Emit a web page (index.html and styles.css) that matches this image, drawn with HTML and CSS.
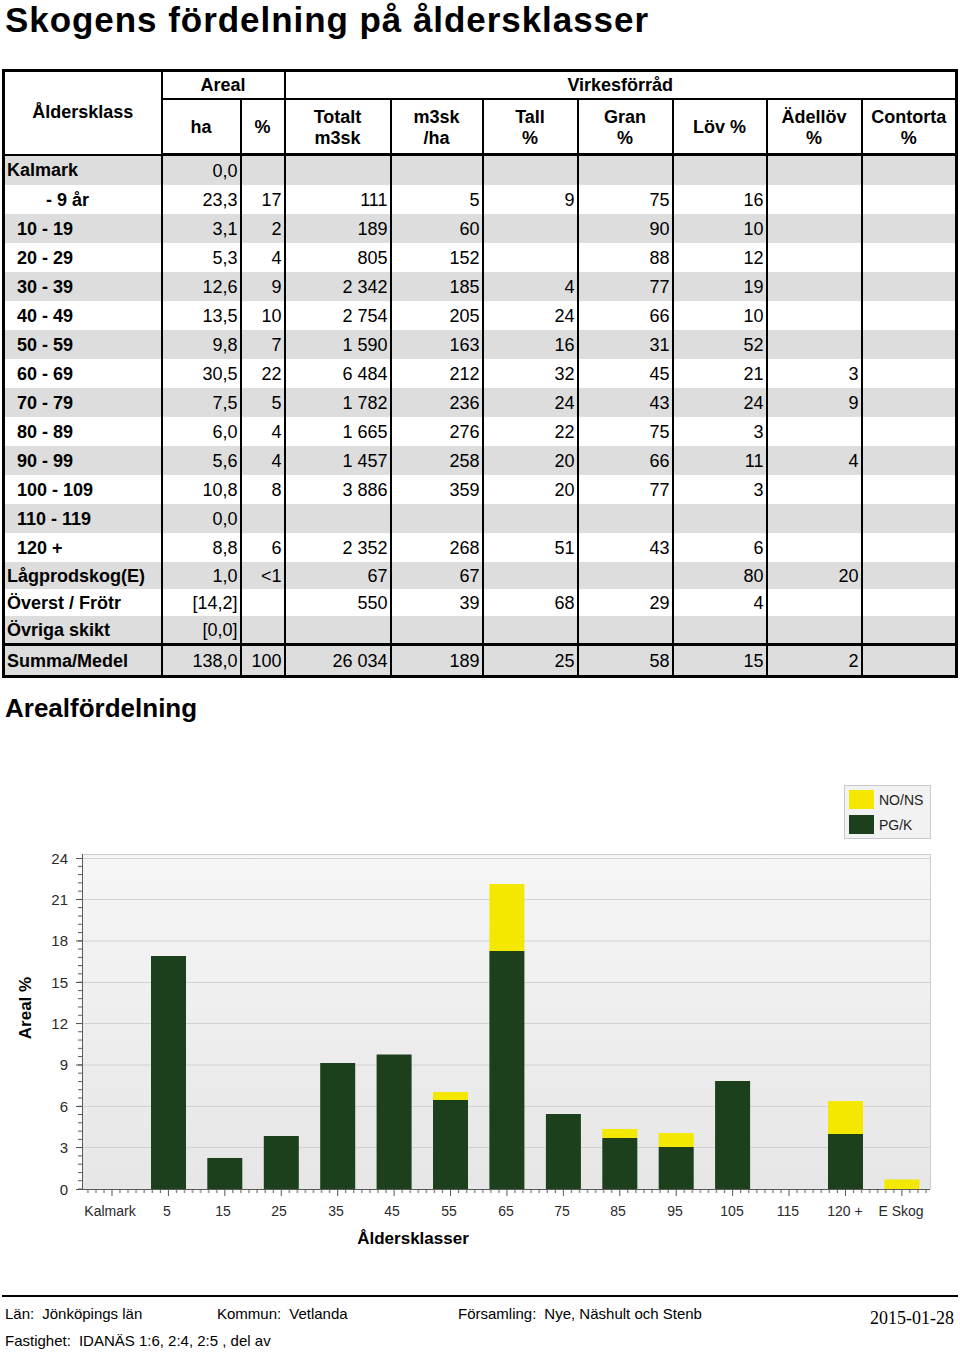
FILE: index.html
```html
<!DOCTYPE html>
<html lang="sv">
<head>
<meta charset="utf-8">
<title>Skogens fördelning på åldersklasser</title>
<link rel="stylesheet" href="styles.css">
</head>
<body>
<h1 class="title">Skogens fördelning på åldersklasser</h1>

<table class="age-table">
  <colgroup>
    <col class="c-label"><col class="c-ha"><col class="c-pct"><col class="c-tot"><col class="c-ha2">
    <col class="c-sp"><col class="c-sp"><col class="c-lov"><col class="c-sp"><col class="c-sp">
  </colgroup>
  <thead>
    <tr class="head-1">
      <th rowspan="2">Åldersklass</th>
      <th colspan="2">Areal</th>
      <th colspan="7">Virkesförråd</th>
    </tr>
    <tr class="head-2">
      <th>ha</th><th>%</th><th>Totalt<br>m3sk</th><th>m3sk<br>/ha</th><th>Tall<br>%</th><th>Gran<br>%</th><th>Löv %</th><th>Ädellöv<br>%</th><th>Contorta<br>%</th>
    </tr>
  </thead>
  <tbody>
    <tr class="alt"><td class="lbl">Kalmark</td><td>0,0</td><td></td><td></td><td></td><td></td><td></td><td></td><td></td><td></td></tr>
    <tr><td class="lbl lbl-deep">- 9 år</td><td>23,3</td><td>17</td><td>111</td><td>5</td><td>9</td><td>75</td><td>16</td><td></td><td></td></tr>
    <tr class="alt"><td class="lbl lbl-in">10 - 19</td><td>3,1</td><td>2</td><td>189</td><td>60</td><td></td><td>90</td><td>10</td><td></td><td></td></tr>
    <tr><td class="lbl lbl-in">20 - 29</td><td>5,3</td><td>4</td><td>805</td><td>152</td><td></td><td>88</td><td>12</td><td></td><td></td></tr>
    <tr class="alt"><td class="lbl lbl-in">30 - 39</td><td>12,6</td><td>9</td><td>2 342</td><td>185</td><td>4</td><td>77</td><td>19</td><td></td><td></td></tr>
    <tr><td class="lbl lbl-in">40 - 49</td><td>13,5</td><td>10</td><td>2 754</td><td>205</td><td>24</td><td>66</td><td>10</td><td></td><td></td></tr>
    <tr class="alt"><td class="lbl lbl-in">50 - 59</td><td>9,8</td><td>7</td><td>1 590</td><td>163</td><td>16</td><td>31</td><td>52</td><td></td><td></td></tr>
    <tr><td class="lbl lbl-in">60 - 69</td><td>30,5</td><td>22</td><td>6 484</td><td>212</td><td>32</td><td>45</td><td>21</td><td>3</td><td></td></tr>
    <tr class="alt"><td class="lbl lbl-in">70 - 79</td><td>7,5</td><td>5</td><td>1 782</td><td>236</td><td>24</td><td>43</td><td>24</td><td>9</td><td></td></tr>
    <tr><td class="lbl lbl-in">80 - 89</td><td>6,0</td><td>4</td><td>1 665</td><td>276</td><td>22</td><td>75</td><td>3</td><td></td><td></td></tr>
    <tr class="alt"><td class="lbl lbl-in">90 - 99</td><td>5,6</td><td>4</td><td>1 457</td><td>258</td><td>20</td><td>66</td><td>11</td><td>4</td><td></td></tr>
    <tr><td class="lbl lbl-in">100 - 109</td><td>10,8</td><td>8</td><td>3 886</td><td>359</td><td>20</td><td>77</td><td>3</td><td></td><td></td></tr>
    <tr class="alt"><td class="lbl lbl-in">110 - 119</td><td>0,0</td><td></td><td></td><td></td><td></td><td></td><td></td><td></td><td></td></tr>
    <tr><td class="lbl lbl-in">120 +</td><td>8,8</td><td>6</td><td>2 352</td><td>268</td><td>51</td><td>43</td><td>6</td><td></td><td></td></tr>
    <tr class="alt short"><td class="lbl">Lågprodskog(E)</td><td>1,0</td><td>&lt;1</td><td>67</td><td>67</td><td></td><td></td><td>80</td><td>20</td><td></td></tr>
    <tr class="mid"><td class="lbl">Överst / Frötr</td><td>[14,2]</td><td></td><td>550</td><td>39</td><td>68</td><td>29</td><td>4</td><td></td><td></td></tr>
    <tr class="alt mid last"><td class="lbl">Övriga skikt</td><td>[0,0]</td><td></td><td></td><td></td><td></td><td></td><td></td><td></td><td></td></tr>
  </tbody>
  <tfoot>
    <tr class="alt sum"><td class="lbl">Summa/Medel</td><td>138,0</td><td>100</td><td>26 034</td><td>189</td><td>25</td><td>58</td><td>15</td><td>2</td><td></td></tr>
  </tfoot>
</table>

<h2 class="section-title">Arealfördelning</h2>

<div class="chart">
<svg class="chart-svg" width="960" height="572" viewBox="0 723 960 572" xmlns="http://www.w3.org/2000/svg">
  <defs>
    <linearGradient id="plotbg" x1="0" y1="0" x2="0" y2="1">
      <stop offset="0" stop-color="#f6f6f6"/>
      <stop offset="1" stop-color="#e6e6e6"/>
    </linearGradient>
    <pattern id="xticks" patternUnits="userSpaceOnUse" x="111.5" y="1189" width="56.42" height="8">
      <rect x="0" y="0" width="1" height="7" fill="#555"/>
      <rect x="8.06" y="0" width="1" height="4" fill="#555"/>
      <rect x="16.12" y="0" width="1" height="4" fill="#555"/>
      <rect x="24.18" y="0" width="1" height="4" fill="#555"/>
      <rect x="32.24" y="0" width="1" height="4" fill="#555"/>
      <rect x="40.3" y="0" width="1" height="4" fill="#555"/>
      <rect x="48.36" y="0" width="1" height="4" fill="#555"/>
    </pattern>
    <pattern id="yticks" patternUnits="userSpaceOnUse" x="78" y="1188.5" width="4" height="8.274">
      <rect x="0" y="0" width="4" height="1" fill="#555"/>
    </pattern>
  </defs>

  <!-- legend -->
  <rect x="844.5" y="785.5" width="86" height="53" fill="#f2f2f2" stroke="#c9c9c9"/>
  <rect x="849" y="790" width="25" height="19" fill="#f5e800"/>
  <rect x="849" y="815" width="25" height="19" fill="#1c3f1c"/>
  <text class="legend-text" x="879" y="805">NO/NS</text>
  <text class="legend-text" x="879" y="830">PG/K</text>

  <!-- plot area -->
  <rect x="82" y="854.5" width="848" height="334.5" fill="url(#plotbg)"/>
  <path d="M82 854.5 H930.5 V1189" fill="none" stroke="#cdcdcd"/>
  <g stroke="#d2d2d2" stroke-width="1">
    <path d="M83 858.5 H930"/>
    <path d="M83 899.5 H930"/>
    <path d="M83 941 H930"/>
    <path d="M83 982.5 H930"/>
    <path d="M83 1023.5 H930"/>
    <path d="M83 1065 H930"/>
    <path d="M83 1106.5 H930"/>
    <path d="M83 1147.5 H930"/>
  </g>

  <!-- bars -->
  <g fill="#1c3f1c">
    <rect x="151" y="956" width="35" height="233"/>
    <rect x="207.3" y="1158" width="35" height="31"/>
    <rect x="263.8" y="1136" width="35" height="53"/>
    <rect x="320.2" y="1063" width="35" height="126"/>
    <rect x="376.6" y="1054.5" width="35" height="134.5"/>
    <rect x="433" y="1100" width="35" height="89"/>
    <rect x="489.4" y="951" width="35" height="238"/>
    <rect x="545.9" y="1114" width="35" height="75"/>
    <rect x="602.3" y="1138" width="35" height="51"/>
    <rect x="658.7" y="1147" width="35" height="42"/>
    <rect x="715.1" y="1081" width="35" height="108"/>
    <rect x="828" y="1134" width="35" height="55"/>
  </g>
  <g fill="#f5e800">
    <rect x="433" y="1092" width="35" height="8"/>
    <rect x="489.4" y="884" width="35" height="67"/>
    <rect x="602.3" y="1129" width="35" height="9"/>
    <rect x="658.7" y="1133" width="35" height="14"/>
    <rect x="828" y="1101" width="35" height="33"/>
    <rect x="884.4" y="1179.5" width="35" height="9.5"/>
  </g>

  <!-- axes -->
  <path d="M82.5 854 V1189.5 M76 1189.5 H930" fill="none" stroke="#5a5a5a" stroke-width="1"/>
  <rect x="78" y="858" width="4" height="331" fill="url(#yticks)"/>
  <g stroke="#555" stroke-width="1">
    <path d="M76 858.5 H82 M76 899.5 H82 M76 941 H82 M76 982.5 H82 M76 1023.5 H82 M76 1065 H82 M76 1106.5 H82 M76 1147.5 H82 M76 1189.5 H82"/>
  </g>
  <rect x="84" y="1190" width="846" height="7" fill="url(#xticks)"/>

  <g class="tick-text y-ticks" text-anchor="end">
    <text x="68" y="864">24</text>
    <text x="68" y="905">21</text>
    <text x="68" y="946">18</text>
    <text x="68" y="988">15</text>
    <text x="68" y="1029">12</text>
    <text x="68" y="1070">9</text>
    <text x="68" y="1112">6</text>
    <text x="68" y="1153">3</text>
    <text x="68" y="1195">0</text>
  </g>
  <g class="tick-text" text-anchor="middle">
    <text x="110" y="1216">Kalmark</text>
    <text x="167" y="1216">5</text>
    <text x="223" y="1216">15</text>
    <text x="279" y="1216">25</text>
    <text x="336" y="1216">35</text>
    <text x="392" y="1216">45</text>
    <text x="449" y="1216">55</text>
    <text x="506" y="1216">65</text>
    <text x="562" y="1216">75</text>
    <text x="618" y="1216">85</text>
    <text x="675" y="1216">95</text>
    <text x="732" y="1216">105</text>
    <text x="788" y="1216">115</text>
    <text x="845" y="1216">120 +</text>
    <text x="901" y="1216">E Skog</text>
  </g>

  <text class="axis-title" x="413" y="1244" text-anchor="middle">Åldersklasser</text>
  <text class="axis-title" x="0" y="0" text-anchor="middle" transform="translate(31 1008) rotate(-90)">Areal %</text>
</svg>
</div>

<footer class="footer">
  <div class="footer-row">
    <div class="f-cell f-lan"><span class="f-key">Län:</span>Jönköpings län</div>
    <div class="f-cell f-kommun"><span class="f-key">Kommun:</span>Vetlanda</div>
    <div class="f-cell f-forsamling"><span class="f-key">Församling:</span>Nye, Näshult och Stenb</div>
    <div class="f-date">2015-01-28</div>
  </div>
  <div class="footer-row">
    <div class="f-cell"><span class="f-key">Fastighet:</span>IDANÄS 1:6, 2:4, 2:5 , del av</div>
  </div>
</footer>
</body>
</html>
```

FILE: styles.css
```css
html, body {
  margin: 0;
  padding: 0;
  background: #ffffff;
  color: #000000;
  font-family: "Liberation Sans", Arial, sans-serif;
}

body {
  width: 960px;
}

.title {
  margin: 0 0 30px 0;
  padding-left: 5px;
  font-size: 35px;
  line-height: 39px;
  height: 39px;
  font-weight: bold;
  letter-spacing: 0.95px;
  white-space: nowrap;
}

/* ---------- table ---------- */
.age-table {
  border-collapse: collapse;
  table-layout: fixed;
  width: 956px;
  margin-left: 2px;
  font-size: 18px;
  border: 3px solid #000;
}

.c-label { width: 158px; }
.c-ha { width: 79px; }
.c-pct { width: 44px; }
.c-tot { width: 106px; }
.c-ha2 { width: 92px; }
.c-sp { width: 95px; }
.c-lov { width: 94px; }

.age-table th {
  border: 2px solid #000;
  font-weight: bold;
  text-align: center;
  vertical-align: middle;
  padding: 0 2px;
  line-height: 21px;
}

.head-1 th {
  height: 26px;
  border-top-width: 3px;
}

.head-2 th {
  height: 51px;
  padding-top: 2px;
  border-bottom-width: 3px;
}

.age-table td {
  border-left: 2px solid #000;
  border-right: 2px solid #000;
  padding: 0 2px 0 2px;
  height: 29px;
  line-height: 20px;
  text-align: right;
  vertical-align: middle;
  white-space: nowrap;
}

.age-table tr.short td { height: 27px; }
.age-table tr.mid td { height: 27px; }

.age-table tr.alt td {
  background: #dddddd;
}

.age-table td.lbl {
  text-align: left;
  font-weight: bold;
  padding-left: 2px;
}

.age-table td.lbl-in { padding-left: 12px; }
.age-table td.lbl-deep { padding-left: 41px; }

.age-table tfoot td {
  border-top: 3px solid #000;
  border-bottom: 3px solid #000;
  height: 29px;
}

/* ---------- chart ---------- */
.section-title {
  margin: 15px 0 0 0;
  padding-left: 5px;
  font-size: 26px;
  line-height: 30px;
  height: 30px;
  font-weight: bold;
}

.chart {
  height: 572px;
}

.chart-svg {
  display: block;
}

.tick-text text {
  font-family: "Liberation Sans", Arial, sans-serif;
  font-size: 14px;
  fill: #2a2a2a;
}

.y-ticks text {
  font-size: 15px;
}

.legend-text {
  font-family: "Liberation Sans", Arial, sans-serif;
  font-size: 14px;
  fill: #222;
}

.axis-title {
  font-family: "Liberation Sans", Arial, sans-serif;
  font-size: 17px;
  font-weight: bold;
  fill: #000;
}

/* ---------- footer ---------- */
.footer {
  margin: 0 2px;
  border-top: 2px solid #000;
  padding: 8px 0 0 3px;
  font-size: 15px;
  line-height: 18px;
}

.footer-row {
  display: flex;
  align-items: flex-start;
}

.footer-row + .footer-row {
  margin-top: 9px;
}

.f-key {
  margin-right: 8px;
}

.f-lan { width: 212px; }
.f-kommun { width: 241px; }
.f-forsamling { flex: 1; }

.f-date {
  font-family: "Liberation Serif", "Times New Roman", serif;
  font-size: 18px;
  line-height: 18px;
  margin-top: 4px;
  margin-bottom: -4px;
  margin-right: 4px;
}
```
